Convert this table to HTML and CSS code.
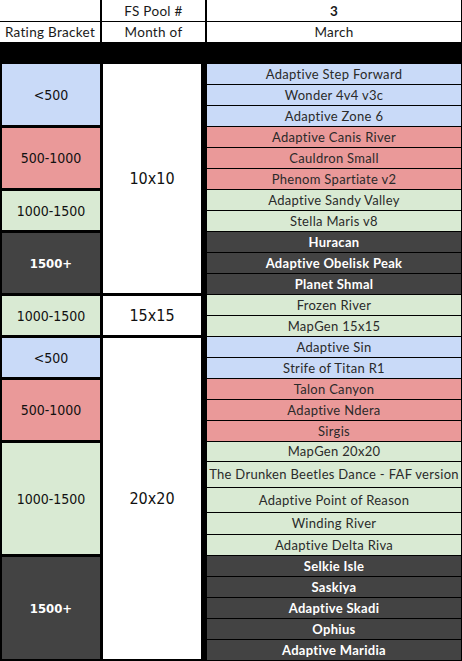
FILE: index.html
```html
<!DOCTYPE html>
<html lang="en">
<head>
<meta charset="utf-8">
<title>FS Pool 3</title>
<link rel="stylesheet" href="styles.css">
</head>
<body>
<div class="sheet">
  <div class="head">
    <div class="hc"></div>
    <div class="hc">FS Pool #</div>
    <div class="hc num">3</div>
    <div class="hc">Rating Bracket</div>
    <div class="hc">Month of</div>
    <div class="hc">March</div>
  </div>
  <div class="body">
    <!-- rating brackets -->
    <div class="br blue s3 top">&lt;500</div>
    <div class="br red s3">500-1000</div>
    <div class="br green s2">1000-1500</div>
    <div class="br dark s3">1500+</div>
    <div class="br green s2">1000-1500</div>
    <div class="br blue s2">&lt;500</div>
    <div class="br red s3">500-1000</div>
    <div class="br green s5">1000-1500</div>
    <div class="br dark s5">1500+</div>
    <!-- sizes -->
    <div class="sz s11 top">10x10</div>
    <div class="sz s2">15x15</div>
    <div class="sz s15">20x20</div>
    <!-- maps -->
    <div class="mp blue">Adaptive Step Forward</div>
    <div class="mp blue">Wonder 4v4 v3c</div>
    <div class="mp blue">Adaptive Zone 6</div>
    <div class="mp red">Adaptive Canis River</div>
    <div class="mp red">Cauldron Small</div>
    <div class="mp red">Phenom Spartiate v2</div>
    <div class="mp green">Adaptive Sandy Valley</div>
    <div class="mp green">Stella Maris v8</div>
    <div class="mp dark">Huracan</div>
    <div class="mp dark">Adaptive Obelisk Peak</div>
    <div class="mp dark">Planet Shmal</div>
    <div class="mp green">Frozen River</div>
    <div class="mp green">MapGen 15x15</div>
    <div class="mp blue">Adaptive Sin</div>
    <div class="mp blue">Strife of Titan R1</div>
    <div class="mp red">Talon Canyon</div>
    <div class="mp red">Adaptive Ndera</div>
    <div class="mp red">Sirgis</div>
    <div class="mp green">MapGen 20x20</div>
    <div class="mp green">The Drunken Beetles Dance - FAF version</div>
    <div class="mp green">Adaptive Point of Reason</div>
    <div class="mp green">Winding River</div>
    <div class="mp green">Adaptive Delta Riva</div>
    <div class="mp dark">Selkie Isle</div>
    <div class="mp dark">Saskiya</div>
    <div class="mp dark">Adaptive Skadi</div>
    <div class="mp dark">Ophius</div>
    <div class="mp dark">Adaptive Maridia</div>
  </div>
</div>
</body>
</html>
```
FILE: styles.css
```css
* { box-sizing: border-box; }
html, body { margin: 0; padding: 0; background: #ffffff; }
body { width: 462px; height: 661px; overflow: hidden; }

.sheet {
  width: 462px;
  font-family: Lato, "Open Sans", sans-serif;
  font-size: 13px;
  font-weight: 400;
  letter-spacing: 0.3px;
  color: #2a2a2a;
}

.head {
  display: grid;
  grid-template-columns: 100px 103px 254px;
  grid-template-rows: 21px 20px;
  column-gap: 2px;
  row-gap: 1px;
  padding-right: 1px;
  padding-bottom: 22px;
  background: #000000;
}
.hc {
  background: #ffffff;
  display: flex;
  align-items: center;
  justify-content: center;
  white-space: nowrap;
  font-size: 13.5px;
  color: #1a1a1a;
}
.hc.num { font-weight: 700; }

.body {
  display: grid;
  grid-template-columns: 98px 3px 98px 6px 254px;
  grid-template-rows: repeat(18, 21px) 20px 26px 25px 22px 21px repeat(5, 21px);
  grid-auto-flow: row dense;
  padding-left: 2px;
  padding-right: 1px;
  background: #000000;
  height: 597px;
}

.br, .sz, .mp {
  display: flex;
  align-items: center;
  justify-content: center;
  white-space: nowrap;
  overflow: hidden;
}

.br {
  grid-column: 1;
  margin-top: 1px;
  margin-bottom: 2px;
  font-family: "DejaVu Sans Condensed", "DejaVu Sans", sans-serif;
  font-stretch: condensed;
  font-weight: 400;
  letter-spacing: 0;
  font-size: 14px;
  color: #111111;
}
.br.dark { font-weight: 700; font-size: 13px; }
.sz {
  grid-column: 3;
  margin-top: 1px;
  margin-bottom: 2px;
  background: #ffffff;
  font-family: "DejaVu Sans Condensed", "DejaVu Sans", sans-serif;
  font-stretch: condensed;
  font-weight: 400;
  letter-spacing: 0;
  font-size: 16px;
  color: #111111;
}
.top { margin-top: 0; }

.mp {
  grid-column: 5;
  border-bottom: 1px solid #000000;
  padding-bottom: 1px;
}

.s2 { grid-row: span 2; }
.s3 { grid-row: span 3; }
.s5 { grid-row: span 5; }
.s11 { grid-row: span 11; }
.s15 { grid-row: span 15; }

.blue { background: #c9daf8; }
.red { background: #ea9999; }
.green { background: #d9ead3; }
.dark { background: #434343; color: #ffffff; font-weight: 700; }
```
